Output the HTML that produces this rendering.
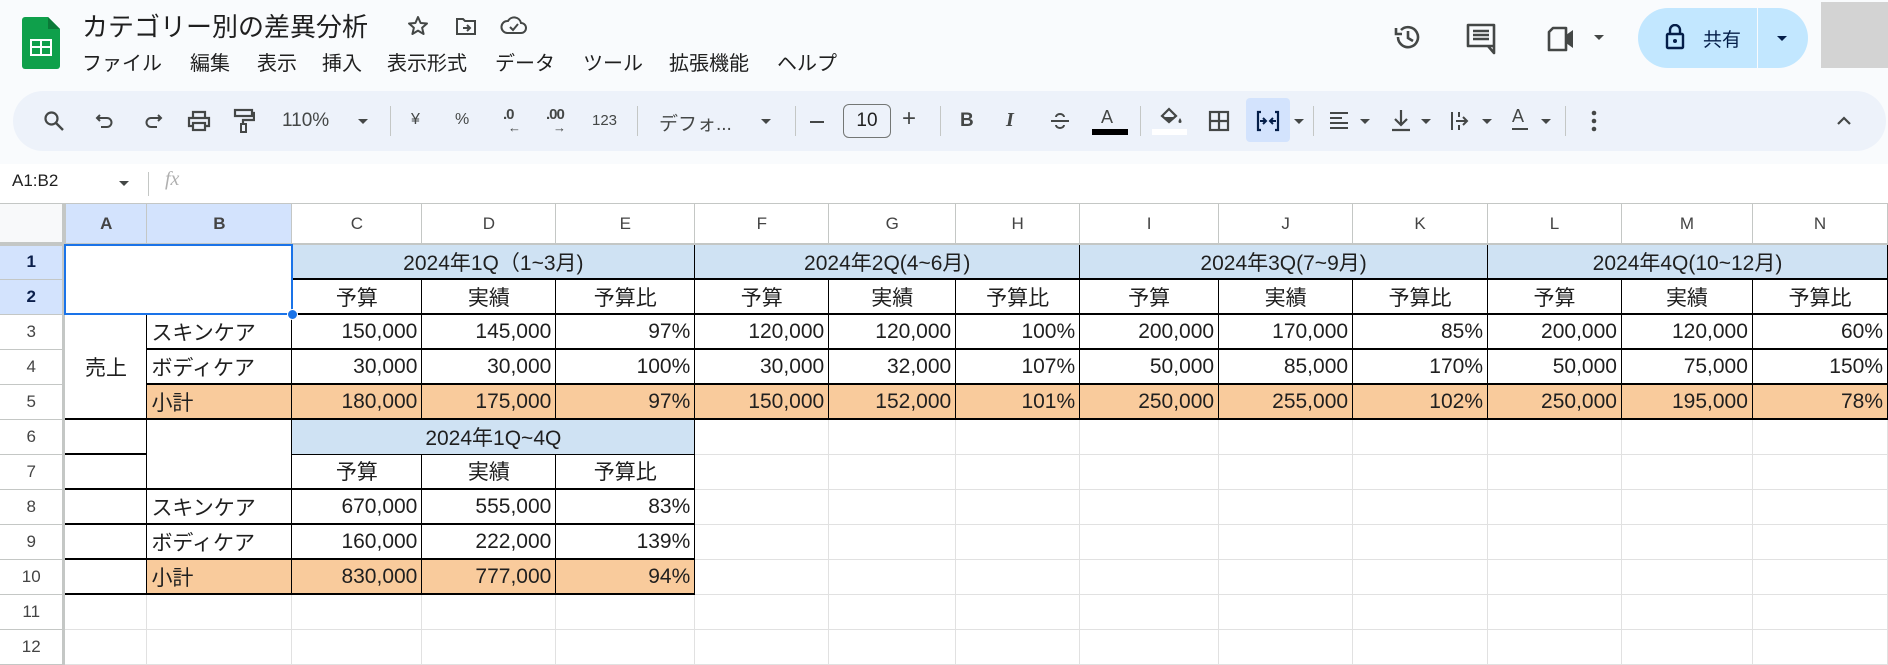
<!DOCTYPE html>
<html><head><meta charset="utf-8"><style>
*{margin:0;padding:0;box-sizing:border-box}
body{width:1888px;height:652px;overflow:hidden;background:#fff;font-family:"Liberation Sans","Noto Sans CJK JP",sans-serif;position:relative;color:#1f1f1f}
.a{position:absolute}
.top{left:0;top:0;width:1888px;height:164px;background:#f9fbfd}
.menu span{position:absolute;top:47px;font-size:20px;color:#1f1f1f}
.tb{left:13px;top:91px;width:1873px;height:60px;background:#edf2fa;border-radius:30px}
.ic{position:absolute}
.sep{position:absolute;top:106px;width:1px;height:30px;background:#c4c7c5}
.t{position:absolute;font-size:16px;color:#444746}
.dd{position:absolute;width:0;height:0;border-left:5px solid transparent;border-right:5px solid transparent;border-top:5px solid #444746}
table{position:absolute;left:0;top:204px;border-collapse:collapse;table-layout:fixed}
td{height:35px;font-size:21px;padding:0 4px;white-space:nowrap;overflow:hidden;border-right:1px solid #e1e1e1;border-bottom:1px solid #e1e1e1;text-align:right}
tr.h td{height:40px;font-size:17px;text-align:center;color:#444;border-right:1px solid #c4c7c5;border-bottom:2px solid #c4c7c5}
td.rh{text-align:center;font-size:17px;color:#444;border-right:3px solid #c4c7c5;border-bottom:1px solid #c4c7c5;background:#fff}
td.sel{background:#d3e3fd;color:#0b1f4b;font-weight:bold}
td.k{border:1px solid #000;border-bottom:2px solid #000}
td.bl{background:#cfe2f3;text-align:center}
td.or{background:#f9cb9c}
td.c{text-align:center}
td.l{text-align:left}
</style></head><body>
<div class="a top"></div>
<svg class="a" style="left:22px;top:17px" width="38" height="52" viewBox="0 0 38 52"><path d="M3 0H26L38 12V49a3 3 0 0 1-3 3H3a3 3 0 0 1-3-3V3a3 3 0 0 1 3-3z" fill="#0fa04b"/><path d="M26 0L38 12H26z" fill="#0b7a38"/><rect x="8" y="22" width="22" height="17" fill="#fff"/><rect x="10" y="24" width="8" height="5" fill="#0fa04b"/><rect x="20" y="24" width="8" height="5" fill="#0fa04b"/><rect x="10" y="31" width="8" height="6" fill="#0fa04b"/><rect x="20" y="31" width="8" height="6" fill="#0fa04b"/></svg>
<div class="a" style="left:82px;top:7px;font-size:26px;color:#1f1f1f">カテゴリー別の差異分析</div>
<svg class="a" style="left:406px;top:14px" width="24" height="24" viewBox="0 0 24 24"><path d="M12 3l2.6 6 6.4.5-4.9 4.2 1.5 6.3L12 16.6 6.4 20l1.5-6.3L3 9.5 9.4 9z" fill="none" stroke="#444746" stroke-width="2" stroke-linejoin="round"/></svg>
<svg class="a" style="left:454px;top:14px" width="24" height="24" viewBox="0 0 24 24"><path d="M3 5h6l2 2h10v13H3z" fill="none" stroke="#444746" stroke-width="2"/><path d="M9 14h6M13 11l3 3-3 3" fill="none" stroke="#444746" stroke-width="2"/></svg>
<svg class="a" style="left:500px;top:13px" width="28" height="24" viewBox="0 0 28 24"><path d="M7 20h14a5 5 0 0 0 0-10 7 7 0 0 0-13-2A6 6 0 0 0 7 20z" fill="none" stroke="#444746" stroke-width="2"/><path d="M10 14l3 3 5-6" fill="none" stroke="#444746" stroke-width="2"/></svg>
<div class="menu"><span style="left:82px">ファイル</span><span style="left:190px">編集</span><span style="left:257px">表示</span><span style="left:322px">挿入</span><span style="left:387px">表示形式</span><span style="left:495px">データ</span><span style="left:583px">ツール</span><span style="left:669px">拡張機能</span><span style="left:777px">ヘルプ</span></div>
<svg class="a" style="left:1393px;top:22px" width="30" height="30" viewBox="0 0 30 30"><path d="M5 15a10 10 0 1 0 3-7" fill="none" stroke="#444746" stroke-width="2.6"/><path d="M3 6v6h6" fill="none" stroke="#444746" stroke-width="2.6"/><path d="M15 9v7l5 3" fill="none" stroke="#444746" stroke-width="2.6"/></svg>
<svg class="a" style="left:1465px;top:23px" width="32" height="32" viewBox="0 0 32 32"><path d="M3 2h26v21H8l5 0 16 0v7l-6-7H3z" fill="none" stroke="#444746" stroke-width="2.6" stroke-linejoin="round"/><path d="M8 8h16M8 12h16M8 16h16" stroke="#444746" stroke-width="2.4"/></svg>
<svg class="a" style="left:1546px;top:25px" width="32" height="28" viewBox="0 0 32 28"><path d="M7 3h13v22H3V7z" fill="none" stroke="#444746" stroke-width="2.6" stroke-linejoin="round"/><path d="M20 10l7-5v18l-7-5z" fill="#444746"/></svg>
<div class="dd" style="left:1594px;top:35px"></div>
<div class="a" style="left:1638px;top:8px;width:170px;height:60px;border-radius:30px;background:#c2e7ff"></div>
<div class="a" style="left:1757px;top:8px;width:1px;height:60px;background:#f9fbfd"></div>
<svg class="a" style="left:1665px;top:24px" width="20" height="26" viewBox="0 0 20 26"><rect x="2" y="10" width="16" height="14" rx="1" fill="none" stroke="#041e49" stroke-width="2.4"/><path d="M5 10V6a5 5 0 0 1 10 0v4" fill="none" stroke="#041e49" stroke-width="2.4"/><circle cx="10" cy="17" r="2" fill="#041e49"/></svg>
<div class="a" style="left:1703px;top:25px;font-size:19px;color:#041e49">共有</div>
<div class="dd" style="left:1777px;top:36px;border-top-color:#041e49"></div>
<div class="a" style="left:1821px;top:2px;width:67px;height:66px;background:#d3d3d3"></div>
<div class="a tb"></div>
<svg class="ic" style="left:43px;top:110px" width="22" height="22" viewBox="0 0 22 22"><circle cx="8.5" cy="8.5" r="6" fill="none" stroke="#444746" stroke-width="2.2"/><path d="M13 13l7 7" stroke="#444746" stroke-width="2.4"/></svg>
<svg class="ic" style="left:95px;top:112px" width="20" height="20" viewBox="0 0 20 20"><path d="M5 3L2 6l3 3M2 6h10a4.5 4.5 0 0 1 0 9H6" fill="none" stroke="#444746" stroke-width="2"/></svg>
<svg class="ic" style="left:143px;top:112px" width="20" height="20" viewBox="0 0 20 20"><path d="M15 3l3 3-3 3M18 6H8a4.5 4.5 0 0 0 0 9h6" fill="none" stroke="#444746" stroke-width="2"/></svg>
<svg class="ic" style="left:187px;top:109px" width="24" height="24" viewBox="0 0 24 24"><path d="M6 8V3h12v5M6 17H2V9h20v8h-4" fill="none" stroke="#444746" stroke-width="2.2"/><rect x="6" y="14" width="12" height="7" fill="none" stroke="#444746" stroke-width="2.2"/></svg>
<svg class="ic" style="left:233px;top:108px" width="22" height="26" viewBox="0 0 22 26"><rect x="2" y="2" width="17" height="6" fill="none" stroke="#444746" stroke-width="2.2"/><path d="M19 5h2v7H10v4" fill="none" stroke="#444746" stroke-width="2.2"/><rect x="8" y="16" width="5" height="8" fill="none" stroke="#444746" stroke-width="2"/></svg>
<div class="t" style="left:282px;top:110px;font-size:19px">110%</div>
<div class="dd" style="left:358px;top:119px"></div>
<div class="sep" style="left:390px"></div>
<div class="t" style="left:411px;top:111px">¥</div>
<div class="t" style="left:455px;top:111px">%</div>
<div class="t" style="left:503px;top:106px;font-size:15px;font-weight:bold;letter-spacing:-1px">.0</div>
<div class="t" style="left:508px;top:120px;font-size:13px">←</div>
<div class="t" style="left:546px;top:106px;font-size:15px;font-weight:bold;letter-spacing:-1px">.00</div>
<div class="t" style="left:553px;top:120px;font-size:13px">→</div>
<div class="t" style="left:592px;top:112px;font-size:15px">123</div>
<div class="sep" style="left:637px"></div>
<div class="t" style="left:659px;top:109px;font-size:19px">デフォ...</div>
<div class="dd" style="left:761px;top:119px"></div>
<div class="sep" style="left:795px"></div>
<div class="a" style="left:810px;top:121px;width:14px;height:2px;background:#444746"></div>
<div class="a" style="left:843px;top:104px;width:48px;height:34px;border:1px solid #747775;border-radius:6px;text-align:center;font-size:19px;line-height:32px;color:#1f1f1f">10</div>
<div class="t" style="left:902px;top:105px;font-size:24px">+</div>
<div class="sep" style="left:940px"></div>
<div class="t" style="left:960px;top:110px;font-size:19px;font-weight:bold">B</div>
<div class="t" style="left:1006px;top:109px;font-size:20px;font-style:italic;font-family:'Liberation Serif',serif;font-weight:bold">I</div>
<svg class="ic" style="left:1049px;top:110px" width="22" height="22" viewBox="0 0 22 22"><path d="M2 11h18" stroke="#444746" stroke-width="2"/><path d="M7 7a4 3 0 0 1 8 0M7 15a4 3 0 0 0 8 0" fill="none" stroke="#444746" stroke-width="2"/></svg>
<div class="t" style="left:1101px;top:107px;font-size:18px">A</div>
<div class="a" style="left:1092px;top:129px;width:36px;height:6px;background:#000"></div>
<div class="sep" style="left:1140px"></div>
<svg class="ic" style="left:1158px;top:106px" width="26" height="22" viewBox="0 0 26 22"><path d="M4 10l7-7 7 7-7 6z" fill="none" stroke="#444746" stroke-width="2.2"/><path d="M5 11h13l-7 6z" fill="#444746"/><path d="M22 12c-2 3-2 5 0 5s2-2 0-5z" fill="#444746"/></svg>
<div class="a" style="left:1152px;top:129px;width:35px;height:6px;background:#fff"></div>
<svg class="ic" style="left:1208px;top:110px" width="22" height="22" viewBox="0 0 22 22"><rect x="2" y="2" width="18" height="18" fill="none" stroke="#444746" stroke-width="2.2"/><path d="M11 2v18M2 11h18" stroke="#444746" stroke-width="2.2"/></svg>
<div class="a" style="left:1246px;top:98px;width:44px;height:44px;background:#d3e3fd;border-radius:4px"></div>
<svg class="ic" style="left:1256px;top:110px" width="24" height="22" viewBox="0 0 24 22"><path d="M5 2H2v18h3M19 2h3v18h-3" fill="none" stroke="#041e49" stroke-width="2.2"/><path d="M4 11h6M7 8l3 3-3 3M20 11h-6M17 8l-3 3 3 3" fill="none" stroke="#041e49" stroke-width="2"/></svg>
<div class="dd" style="left:1294px;top:119px"></div>
<div class="sep" style="left:1313px"></div>
<svg class="ic" style="left:1328px;top:110px" width="22" height="22" viewBox="0 0 22 22"><path d="M2 3h18M2 8h12M2 13h18M2 18h18" stroke="#444746" stroke-width="2"/></svg>
<div class="dd" style="left:1360px;top:119px"></div>
<svg class="ic" style="left:1390px;top:108px" width="22" height="24" viewBox="0 0 22 24"><path d="M11 2v14M5 11l6 6 6-6M2 22h18" fill="none" stroke="#444746" stroke-width="2.2"/></svg>
<div class="dd" style="left:1421px;top:119px"></div>
<svg class="ic" style="left:1449px;top:110px" width="22" height="22" viewBox="0 0 22 22"><path d="M3 2v18M7 11h10M14 7l4 4-4 4M10 2v5M10 15v5" fill="none" stroke="#444746" stroke-width="2"/></svg>
<div class="dd" style="left:1482px;top:119px"></div>
<div class="t" style="left:1512px;top:106px;font-size:18px">A</div>
<div class="a" style="left:1512px;top:128px;width:16px;height:2px;background:#444746"></div>
<div class="dd" style="left:1541px;top:119px"></div>
<div class="sep" style="left:1565px"></div>
<svg class="ic" style="left:1590px;top:109px" width="8" height="24" viewBox="0 0 8 24"><circle cx="4" cy="4" r="2.3" fill="#444746"/><circle cx="4" cy="12" r="2.3" fill="#444746"/><circle cx="4" cy="20" r="2.3" fill="#444746"/></svg>
<svg class="ic" style="left:1836px;top:115px" width="16" height="12" viewBox="0 0 16 12"><path d="M2 9l6-6 6 6" fill="none" stroke="#444746" stroke-width="2.2"/></svg>
<div class="a" style="left:12px;top:171px;font-size:17px;color:#1f1f1f">A1:B2</div>
<div class="dd" style="left:119px;top:181px"></div>
<div class="a" style="left:148px;top:172px;width:1px;height:24px;background:#c4c7c5"></div>
<div class="a" style="left:165px;top:168px;font-size:20px;font-style:italic;font-family:'Liberation Serif',serif;color:#b0b0b0">fx</div>
<div class="a" style="left:0;top:203px;width:1888px;height:1px;background:#c4c7c5"></div>
<table>
<colgroup><col style="width:64px"><col style="width:83px"><col style="width:145px"><col style="width:130px"><col style="width:134px"><col style="width:139px"><col style="width:134px"><col style="width:127px"><col style="width:124px"><col style="width:139px"><col style="width:134px"><col style="width:135px"><col style="width:134px"><col style="width:131px"><col style="width:135px"></colgroup>
<tr class="h"><td style="background:#f8f9fa;border-right:4px solid #c4c7c5;border-bottom:4px solid #c4c7c5"></td><td class="sel">A</td><td class="sel">B</td><td>C</td><td>D</td><td>E</td><td>F</td><td>G</td><td>H</td><td>I</td><td>J</td><td>K</td><td>L</td><td>M</td><td>N</td></tr>
<tr><td class="rh sel">1</td><td colspan="2" rowspan="2" style="border-bottom:2px solid #000"></td><td colspan="3" class="k bl">2024年1Q（1~3月)</td><td colspan="3" class="k bl">2024年2Q(4~6月)</td><td colspan="3" class="k bl">2024年3Q(7~9月)</td><td colspan="3" class="k bl">2024年4Q(10~12月)</td></tr>
<tr><td class="rh sel">2</td><td class="k c">予算</td><td class="k c">実績</td><td class="k c">予算比</td><td class="k c">予算</td><td class="k c">実績</td><td class="k c">予算比</td><td class="k c">予算</td><td class="k c">実績</td><td class="k c">予算比</td><td class="k c">予算</td><td class="k c">実績</td><td class="k c">予算比</td></tr>
<tr><td class="rh">3</td><td rowspan="3" class="k c" style="border-top:none;border-left:none">売上</td><td class="k l">スキンケア</td><td class="k">150,000</td><td class="k">145,000</td><td class="k">97%</td><td class="k">120,000</td><td class="k">120,000</td><td class="k">100%</td><td class="k">200,000</td><td class="k">170,000</td><td class="k">85%</td><td class="k">200,000</td><td class="k">120,000</td><td class="k">60%</td></tr>
<tr><td class="rh">4</td><td class="k l">ボディケア</td><td class="k">30,000</td><td class="k">30,000</td><td class="k">100%</td><td class="k">30,000</td><td class="k">32,000</td><td class="k">107%</td><td class="k">50,000</td><td class="k">85,000</td><td class="k">170%</td><td class="k">50,000</td><td class="k">75,000</td><td class="k">150%</td></tr>
<tr><td class="rh">5</td><td class="k l or">小計</td><td class="k or">180,000</td><td class="k or">175,000</td><td class="k or">97%</td><td class="k or">150,000</td><td class="k or">152,000</td><td class="k or">101%</td><td class="k or">250,000</td><td class="k or">255,000</td><td class="k or">102%</td><td class="k or">250,000</td><td class="k or">195,000</td><td class="k or">78%</td></tr>
<tr><td class="rh">6</td><td class="k"></td><td rowspan="2" class="k"></td><td colspan="3" class="k bl" style="border-bottom:1px solid #000">2024年1Q~4Q</td><td></td><td></td><td></td><td></td><td></td><td></td><td></td><td></td><td></td></tr>
<tr><td class="rh">7</td><td class="k"></td><td class="k c">予算</td><td class="k c">実績</td><td class="k c">予算比</td><td></td><td></td><td></td><td></td><td></td><td></td><td></td><td></td><td></td></tr>
<tr><td class="rh">8</td><td class="k"></td><td class="k l">スキンケア</td><td class="k">670,000</td><td class="k">555,000</td><td class="k">83%</td><td></td><td></td><td></td><td></td><td></td><td></td><td></td><td></td><td></td></tr>
<tr><td class="rh">9</td><td class="k"></td><td class="k l">ボディケア</td><td class="k">160,000</td><td class="k">222,000</td><td class="k">139%</td><td></td><td></td><td></td><td></td><td></td><td></td><td></td><td></td><td></td></tr>
<tr><td class="rh">10</td><td class="k"></td><td class="k l or">小計</td><td class="k or">830,000</td><td class="k or">777,000</td><td class="k or">94%</td><td></td><td></td><td></td><td></td><td></td><td></td><td></td><td></td><td></td></tr>
<tr><td class="rh">11</td><td></td><td></td><td></td><td></td><td></td><td></td><td></td><td></td><td></td><td></td><td></td><td></td><td></td><td></td></tr>
<tr><td class="rh">12</td><td></td><td></td><td></td><td></td><td></td><td></td><td></td><td></td><td></td><td></td><td></td><td></td><td></td><td></td></tr>
</table>
<div class="a" style="left:64px;top:244px;width:229px;height:71px;border:2px solid #1a73e8"></div>
<div class="a" style="left:287px;top:309px;width:11px;height:11px;border-radius:50%;background:#1a73e8;border:1px solid #fff"></div>
</body></html>
